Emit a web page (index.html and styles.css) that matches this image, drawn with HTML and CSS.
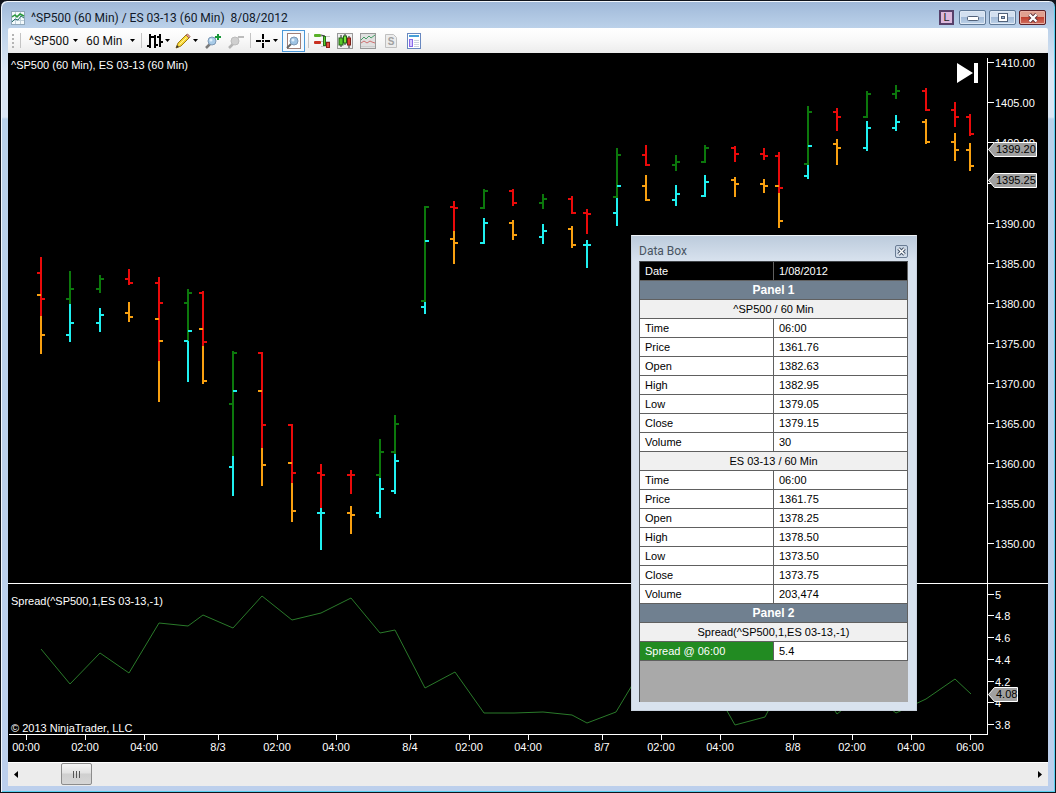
FILE: index.html
```html
<!DOCTYPE html>
<html lang="en">
<head>
    <meta charset="UTF-8">
    <meta name="viewport" content="width=device-width, initial-scale=1.0">
    <title>^SP500 (60 Min) / ES 03-13 (60 Min)</title>
    <link rel="stylesheet" href="styles.css">
</head>
<body>
    <div class="window">
        <header class="titlebar">
            <svg class="app-icon" width="14" height="14" viewBox="0 0 14 14">
                <rect x="0.5" y="0.5" width="13" height="13" fill="#f4fafc" stroke="#8fa6b8"/>
                <path d="M1 4.5h12M1 9.5h12M4.5 1v12M9.5 1v12" stroke="#c0d0da"/>
                <path d="M1 6l3-2 2 2 3-3 4 2" fill="none" stroke="#2a9a3a" stroke-width="1.5"/>
                <path d="M1 11l3-3 3 1 3-4 3 2" fill="none" stroke="#28706a"/>
            </svg>
            <h1>^SP500 (60 Min) / ES 03-13 (60 Min)&nbsp; 8/08/2012</h1>
            <button class="link-btn" aria-label="Link">L</button>
            <button class="win-btn" aria-label="Minimize">
                <svg width="12" height="6" viewBox="0 0 12 6"><rect x="0.5" y="1.5" width="11" height="4" rx="1" fill="#fff" stroke="#52627a"/></svg>
            </button>
            <button class="win-btn" aria-label="Maximize">
                <svg width="12" height="10" viewBox="0 0 12 10"><rect x="1.5" y="0.5" width="9" height="8" fill="#fff" stroke="#52627a"/><rect x="4.5" y="3.5" width="3" height="2" fill="#9fb6d2" stroke="#52627a"/></svg>
            </button>
            <button class="win-btn close" aria-label="Close">
                <svg width="12" height="10" viewBox="0 0 12 10"><path d="M2.5 1.5l7 7M9.5 1.5l-7 7" stroke="#5a3038" stroke-width="4"/><path d="M2.5 1.5l7 7M9.5 1.5l-7 7" stroke="#fff" stroke-width="2.4"/></svg>
            </button>
        </header>

        <nav class="toolbar">
            <span class="grip"></span>
            <span class="sep"></span>
            <label class="drop">
                <select class="instrument" aria-label="Instrument"><option>^SP500</option></select>
                <svg class="arrow" width="5" height="3"><path d="M0 0h5L2.5 3z"/></svg>
            </label>
            <label class="drop">
                <select class="period" aria-label="Period"><option>60 Min</option></select>
                <svg class="arrow" width="5" height="3"><path d="M0 0h5L2.5 3z"/></svg>
            </label>
            <span class="sep"></span>
            <button class="tool split" aria-label="Chart style">
                <svg width="16" height="16" viewBox="0 0 16 16" shape-rendering="crispEdges"><path d="M3 1v14M8 2v13M13 1v13M0 13h3M3 4h3M6 4h2M8 12h3M10 4h3M13 9h3" stroke="#000" stroke-width="2"/></svg>
                <svg class="arrow" width="5" height="3"><path d="M0 0h5L2.5 3z"/></svg>
            </button>
            <button class="tool split" aria-label="Drawing tools">
                <svg width="16" height="16" viewBox="0 0 16 16"><path d="M1 15l2-5 8-8 3 3-8 8z" fill="#f8d838" stroke="#a07a10"/><path d="M4.5 11.5l7-7" stroke="#fff3a0"/><path d="M11 2l1.5-1 2.5 2.5L14 5z" fill="#e8a0a0" stroke="#a06a50"/><path d="M1 15l1-3 2 2z" fill="#333"/></svg>
                <svg class="arrow" width="5" height="3"><path d="M0 0h5L2.5 3z"/></svg>
            </button>
            <button class="tool zoom" aria-label="Zoom in">
                <svg width="16" height="16" viewBox="0 0 16 16"><path d="M1 15l4-4" stroke="#7a7a7a" stroke-width="2.5"/><circle cx="7" cy="8" r="4" fill="#a8cbe8" stroke="#7c98b4"/><circle cx="6" cy="7" r="1.5" fill="#e0f0fc"/><path d="M10 4h6M13 1v6" stroke="#189838" stroke-width="2"/></svg>
            </button>
            <button class="tool zoom" aria-label="Zoom out">
                <svg width="16" height="16" viewBox="0 0 16 16"><path d="M1 15l4-4" stroke="#b4b4b4" stroke-width="2.5"/><circle cx="7" cy="8" r="4" fill="#cfcfcf" stroke="#bcbcbc"/><path d="M10 4h6" stroke="#bcbcbc" stroke-width="2"/></svg>
            </button>
            <span class="sep"></span>
            <button class="tool split" aria-label="Crosshair">
                <svg width="15" height="16" viewBox="0 0 15 16" shape-rendering="crispEdges"><path d="M0 8h5M9 8h5M7 1v5M7 10v5" stroke="#000" stroke-width="2"/><rect x="6" y="7" width="2" height="2"/></svg>
                <svg class="arrow" width="5" height="3"><path d="M0 0h5L2.5 3z"/></svg>
            </button>
            <button class="tool active" aria-label="Data box">
                <svg width="16" height="16" viewBox="0 0 16 16"><rect x="1.5" y="0.5" width="13" height="15" fill="#fff" stroke="#a08078"/><path d="M1 15l4-4" stroke="#666" stroke-width="2"/><circle cx="8" cy="8" r="4" fill="#9fc4e4" stroke="#7c98b4"/><circle cx="7" cy="7" r="1.5" fill="#e0f0fc"/></svg>
            </button>
            <span class="sep"></span>
            <button class="tool panel-icon" aria-label="Chart trader">
                <svg width="16" height="16" viewBox="0 0 16 16"><path d="M7 3.5h9M7 8.5h9M7 13.5h9" stroke="#c4c4c4"/><rect x="0" y="1" width="7" height="3" rx="1" fill="#58b028"/><rect x="0" y="8" width="7" height="3" rx="1" fill="#c83020"/><path d="M7 2l4 1" stroke="#333"/><rect x="9.5" y="3.5" width="2" height="9" fill="#60d030" stroke="#287018"/><rect x="12.5" y="9.5" width="3" height="5" fill="#e05040" stroke="#902018"/></svg>
            </button>
            <button class="tool panel-icon" aria-label="Data series">
                <svg width="16" height="16" viewBox="0 0 16 16"><rect x="0.5" y="0.5" width="15" height="15" fill="#eee" stroke="#999"/><path d="M4 2v12M8 1v11M12 3v12" stroke="#222"/><rect x="2" y="5" width="4" height="7" fill="#58c828" stroke="#226018"/><rect x="6.5" y="3" width="3" height="7" fill="#78e838" stroke="#226018"/><rect x="10.5" y="5" width="3" height="7" fill="#d84030" stroke="#802018"/></svg>
            </button>
            <button class="tool panel-icon" aria-label="Indicators">
                <svg width="16" height="16" viewBox="0 0 16 16"><rect x="0.5" y="0.5" width="15" height="15" fill="#e0e0e0" stroke="#999"/><path d="M1 13.5h14" stroke="#ccc"/><path d="M1 7l3-3 2 2 3-3 2 2 4-3" fill="none" stroke="#48a068"/><path d="M1 10l3-2 3 2 3-2 2 1 3 1" fill="none" stroke="#d07070"/></svg>
            </button>
            <button class="tool panel-icon" aria-label="Strategies" disabled>
                <svg width="16" height="16" viewBox="0 0 16 16"><path d="M2.5 1.5h8l3 3v10h-11z" fill="#ececec" stroke="#c0c0c0"/><text x="8" y="12" class="dollar">S</text></svg>
            </button>
            <button class="tool panel-icon" aria-label="Properties">
                <svg width="16" height="16" viewBox="0 0 16 16"><rect x="1.5" y="0.5" width="13" height="15" fill="#fff" stroke="#6888c0"/><rect x="3" y="2" width="10" height="2" fill="#48a0d8"/><rect x="3.5" y="6.5" width="3" height="7" fill="#d8c8ff" stroke="#8868e8"/><path d="M8 7.5h5M8 9.5h5M8 11.5h5M8 13.5h5" stroke="#ccd2de"/></svg>
            </button>
        </nav>

        <main class="chart">
            <svg id="chart" class="chart-svg" viewBox="8 53 1040 708" role="img" aria-label="Price and spread chart"></svg>
            <button class="go-end" aria-label="Go to last bar">
                <svg width="22" height="22" viewBox="0 0 22 22"><path d="M0 1l16 10L0 21zM17 1h4v20h-4z" fill="#fff"/></svg>
            </button>

            <section class="databox">
                <div class="databox-title">
                    <h2>Data Box</h2>
                    <button class="databox-close" aria-label="Close data box">
                        <svg width="9" height="9" viewBox="0 0 9 9"><path d="M1.5 1.5l6 6M7.5 1.5l-6 6" stroke="#44546a" stroke-width="3.5"/><path d="M1.5 1.5l6 6M7.5 1.5l-6 6" stroke="#fff" stroke-width="1.5"/></svg>
                    </button>
                </div>
                <div class="databox-body">
                    <table>
                        <tbody>
                            <tr class="date"><td>Date</td><td>1/08/2012</td></tr>
                            <tr class="panel"><th colspan="2">Panel 1</th></tr>
                            <tr class="series"><th colspan="2">^SP500 / 60 Min</th></tr>
                            <tr><td>Time</td><td>06:00</td></tr>
                            <tr><td>Price</td><td>1361.76</td></tr>
                            <tr><td>Open</td><td>1382.63</td></tr>
                            <tr><td>High</td><td>1382.95</td></tr>
                            <tr><td>Low</td><td>1379.05</td></tr>
                            <tr><td>Close</td><td>1379.15</td></tr>
                            <tr><td>Volume</td><td>30</td></tr>
                            <tr class="series"><th colspan="2">ES 03-13 / 60 Min</th></tr>
                            <tr><td>Time</td><td>06:00</td></tr>
                            <tr><td>Price</td><td>1361.75</td></tr>
                            <tr><td>Open</td><td>1378.25</td></tr>
                            <tr><td>High</td><td>1378.50</td></tr>
                            <tr><td>Low</td><td>1373.50</td></tr>
                            <tr><td>Close</td><td>1373.75</td></tr>
                            <tr><td>Volume</td><td>203,474</td></tr>
                            <tr class="panel"><th colspan="2">Panel 2</th></tr>
                            <tr class="series"><th colspan="2">Spread(^SP500,1,ES 03-13,-1)</th></tr>
                            <tr class="spread"><td>Spread @ 06:00</td><td>5.4</td></tr>
                        </tbody>
                    </table>
                </div>
            </section>
        </main>

        <footer class="scroll">
            <button aria-label="Scroll left"><svg width="4" height="7"><path d="M4 0v7L0 3.5z"/></svg></button>
            <input type="range" min="0" max="1000" value="38" aria-label="Scroll chart">
            <button aria-label="Scroll right"><svg width="4" height="7"><path d="M0 0v7l4-3.5z"/></svg></button>
        </footer>
    </div>
    <script src="chart.js"></script>
</body>
</html>
```

FILE: styles.css
```css
* {
    box-sizing: border-box;
}
body {
    margin: 0;
    background: #10141c;
    font-family: "Liberation Sans", Arial, sans-serif;
    font-size: 11px;
    color: #000;
}
button {
    padding: 0;
    margin: 0;
    border: none;
    background: none;
    display: flex;
    align-items: center;
    justify-content: center;
}
svg {
    display: block;
    flex: none;
}
.window {
    display: flex;
    flex-direction: column;
    min-height: 100vh;
    padding: 0 6px 6px;
    border: 1px solid #10141c;
    border-radius: 7px 7px 0 0;
    background: linear-gradient(#9fb8d8, #bcd2ea 28px, #dbe6f4 70px, #dbe6f4 116px, #b9d1ea 118px, #bccfec);
    box-shadow: inset 1px 1px 0 #f2f7fc, inset -1px -1px 0 #58d0f0;
}

/* title bar */
.titlebar {
    display: flex;
    align-items: center;
    gap: 3px;
    height: 27px;
    padding: 6px 3px 0 4px;
}
.titlebar h1 {
    flex: 1;
    margin: 0 0 0 3px;
    font: 12px/16px Roboto, sans-serif;
    color: #101828;
}
.link-btn {
    width: 15px;
    height: 15px;
    margin-right: 2px;
    border: 2px solid #56406a;
    background: #dcb8dc;
    font: 11px/11px "Liberation Sans", Arial, sans-serif;
    color: #222;
}
.win-btn {
    width: 27px;
    height: 15px;
    border: 1px solid #5f7896;
    border-radius: 2px;
    background: linear-gradient(#d3e0f0 45%, #a3bbd8 50%, #bdd2e8);
    box-shadow: inset 0 0 0 1px #dfe9f5;
}
.win-btn.close {
    border-color: #5c2028;
    background: linear-gradient(#e0a090 45%, #c04030 50%, #d07060);
    box-shadow: inset 0 0 0 1px #e8b0a4;
}

/* toolbar */
.toolbar {
    display: flex;
    align-items: center;
    height: 25px;
    margin: 0 1px;
    border-radius: 2px;
    background: linear-gradient(#ffffff, #f8f8f8 50%, #ececec);
}
.grip {
    width: 2px;
    height: 14px;
    margin: 0 6px 0 4px;
    background: repeating-linear-gradient(#b4b4b4 0 2px, transparent 2px 4px);
}
.sep {
    width: 1px;
    height: 15px;
    background: #c4c4c4;
}
.drop {
    display: flex;
    align-items: center;
    margin-left: 8px;
}
select {
    appearance: none;
    padding: 0;
    border: none;
    background: none;
    font: 12px/16px Roboto, sans-serif;
    color: #111;
}
.instrument,
.period {
    width: 44px;
}
.period + .arrow {
    margin-right: 6px;
}
.tool {
    height: 22px;
    margin-left: 5px;
}
.split {
    gap: 2px;
}
.zoom {
    margin-left: 7px;
}
.zoom + .sep {
    margin-left: 6px;
}
.active {
    width: 23px;
    margin: 0 3px 0 4px;
    border: 1px solid #4a98d8;
    background: #f4faff;
}
.panel-icon {
    margin-left: 5px;
    margin-right: 2px;
}
.dollar {
    font: bold 10px "Liberation Sans", Arial, sans-serif;
    fill: #a0a0a0;
    text-anchor: middle;
}

/* chart */
.chart {
    position: relative;
    flex: 1;
    margin: 0 1px;
    background: #000;
}
.chart-svg {
    width: 100%;
    height: auto;
    font-size: 11px;
}
.chart-svg text {
    fill: #fff;
}
.chart-svg .middle {
    text-anchor: middle;
}
.chart-svg .tag-text {
    fill: #000;
}
.axis {
    stroke: #fff;
    fill: none;
    shape-rendering: crispEdges;
}
.tag {
    fill: #a0a0a0;
    stroke: #fff;
}
.bar {
    stroke-width: 2;
    fill: none;
    shape-rendering: crispEdges;
}
.sp-up { stroke: #0c780c; }
.sp-down { stroke: #ea0a0a; }
.es-up { stroke: #1ff0f0; }
.es-down { stroke: #f8a010; }
.spread-line {
    fill: none;
    stroke: #2a7a2a;
}
.go-end {
    position: absolute;
    top: 9px;
    right: 69px;
}

/* data box */
.databox {
    position: absolute;
    top: 182px;
    right: 131px;
    width: 286px;
    padding: 0 8px 8px 7px;
    border: 1px solid #c8d2de;
    border-top-color: #f0f4f8;
    background: linear-gradient(#bccbdc, #d8e2ee 25px);
}
.databox-title {
    display: flex;
    align-items: center;
    justify-content: space-between;
    height: 25px;
    padding-top: 5px;
}
.databox-title h2 {
    margin: 0;
    font: 12px/16px Roboto, sans-serif;
    color: #485462;
}
.databox-close {
    width: 13px;
    height: 13px;
    border: 1px solid #6a7c94;
    border-radius: 2px;
}
.databox-body {
    padding-bottom: 41px;
    border-top: 1px solid #404448;
    border-left: 1px solid #505458;
    background: #a9a9a9;
}
table {
    width: 100%;
    table-layout: fixed;
    border-collapse: separate;
    border-spacing: 0;
    line-height: 18px;
}
td,
th {
    height: 19px;
    padding: 0 5px;
    border-bottom: 1px solid #606060;
    border-right: 1px solid #606060;
    background: #fff;
    font-weight: normal;
    text-align: left;
}
th {
    text-align: center;
}
.date td {
    background: #000;
    color: #fff;
}
.panel th {
    background: #708090;
    color: #fff;
    font-weight: bold;
    font-size: 12px;
}
.series th {
    background: #f0f0f0;
}
.spread td:first-child {
    background: #228b22;
    color: #fff;
}

/* scroll bar */
.scroll {
    display: flex;
    height: 24px;
    margin: 0 1px;
    border-top: 1px solid #fff;
    background: #ececec;
}
.scroll button {
    width: 16px;
    height: 22px;
}
.scroll input {
    appearance: none;
    flex: 1;
    min-width: 0;
    height: 22px;
    margin: 0;
    background: none;
}
.scroll input::-webkit-slider-thumb {
    appearance: none;
    width: 31px;
    height: 22px;
    border: 1px solid #8c8c8c;
    border-radius: 2px;
    background:
        repeating-linear-gradient(90deg, #555 0 1px, transparent 1px 3px) center / 7px 7px no-repeat,
        linear-gradient(#f4f4f4, #e2e2e2 45%, #cfcfcf 50%, #d6d6d6);
}
```

FILE: chart.js
```js
// x, then for each series: direction, top, bottom, open, close
const bars = [
    [41, 'down', 257, 316, 273, 299, 'down', 316, 354, 295, 335],
    [70, 'up', 271, 304, 299, 289, 'up', 304, 342, 335, 323],
    [100, 'up', 275, 293, 289, 279, 'up', 308, 332, 323, 315],
    [129, 'down', 269, 285, 279, 283, 'down', 302, 322, 313, 317],
    [159, 'down', 277, 361, 283, 303, 'down', 361, 402, 319, 341],
    [188, 'up', 289, 341, 303, 293, 'up', 341, 382, 341, 331],
    [203, 'down', 291, 346, 293, 342, 'down', 346, 384, 329, 381],
    [233, 'up', 351, 456, 404, 353, 'up', 456, 496, 467, 391],
    [262, 'down', 352, 448, 353, 425, 'down', 448, 486, 391, 465],
    [292, 'down', 424, 483, 425, 473, 'down', 483, 522, 463, 511],
    [321, 'down', 464, 508, 473, 475, 'up', 508, 550, 513, 513],
    [351, 'down', 470, 494, 475, 475, 'down', 506, 534, 513, 515],
    [380, 'up', 439, 478, 475, 452, 'up', 478, 518, 513, 489],
    [395, 'up', 415, 454, 452, 424, 'up', 454, 494, 491, 461],
    [425, 'up', 206, 302, 301, 207, 'up', 302, 314, 307, 241],
    [454, 'down', 201, 231, 207, 208, 'down', 231, 264, 239, 243],
    [484, 'up', 189, 209, 208, 191, 'up', 218, 244, 243, 223],
    [513, 'down', 189, 206, 191, 203, 'down', 220, 240, 223, 235],
    [543, 'up', 194, 209, 203, 199, 'up', 224, 244, 237, 231],
    [572, 'down', 196, 214, 199, 213, 'down', 226, 248, 229, 245],
    [587, 'down', 209, 234, 213, 214, 'up', 240, 268, 245, 245],
    [617, 'up', 148, 198, 197, 155, 'up', 198, 226, 213, 186],
    [646, 'down', 145, 166, 155, 165, 'down', 175, 201, 186, 200],
    [676, 'up', 155, 171, 165, 162, 'up', 185, 206, 200, 194],
    [705, 'up', 145, 163, 162, 148, 'up', 175, 197, 196, 182],
    [735, 'down', 146, 162, 148, 154, 'down', 177, 197, 180, 184],
    [764, 'down', 148, 160, 154, 156, 'down', 179, 193, 184, 186],
    [779, 'down', 152, 193, 156, 188, 'down', 193, 228, 186, 221],
    [808, 'up', 106, 165, 164, 112, 'up', 165, 179, 176, 146],
    [837, 'down', 108, 131, 112, 117, 'down', 139, 165, 144, 148],
    [867, 'up', 91, 118, 117, 94, 'up', 121, 151, 148, 128],
    [896, 'up', 85, 99, 94, 91, 'up', 115, 131, 128, 122],
    [926, 'down', 88, 111, 91, 110, 'down', 119, 144, 122, 142],
    [955, 'down', 102, 127, 110, 117, 'down', 133, 161, 142, 150],
    [970, 'down', 114, 136, 117, 134, 'down', 143, 171, 150, 166]
];

const spread = '41,649 70,684 100,653 129,673 159,623 188,626 203,615 233,628 262,596 292,620 321,613 351,598 380,633 395,630 425,688 455,672 484,713 514,713 543,712 572,715 587,723 616,712 646,662 676,665 705,672 735,725 765,717 779,690 808,670 837,714 867,690 896,713 926,699 955,679 971,694';

const prices = [
    ['1410.00', 62], ['1405.00', 102], ['1400.00', 142], ['', 183], ['1390.00', 223],
    ['1385.00', 263], ['1380.00', 303], ['1375.00', 343], ['1370.00', 383], ['1365.00', 423],
    ['1360.00', 463], ['1355.00', 503], ['1350.00', 543],
    ['5', 594], ['4.8', 615], ['4.6', 637], ['4.4', 659], ['4.2', 681], ['4', 702], ['3.8', 724]
];

const times = [
    ['00:00', 26], ['02:00', 85], ['04:00', 144], ['8/3', 218], ['02:00', 277], ['04:00', 336],
    ['8/4', 410], ['02:00', 469], ['04:00', 528], ['8/7', 602], ['02:00', 661], ['04:00', 720],
    ['8/8', 793], ['02:00', 852], ['04:00', 911], ['06:00', 970]
];

const tags = [['1399.20', 149, 1037], ['1395.25', 180, 1037], ['4.08', 694, 1018]];

function text(x, y, value, cls) {
    return `<text x="${x}" y="${y}" class="${cls || ''}">${value}</text>`;
}

function line(d, cls) {
    return `<path d="${d}" class="${cls}"/>`;
}

function drawBar(x, series, dir, top, bottom, open, close) {
    return line(`M${x} ${top}V${bottom}M${x - 4} ${open}H${x}M${x} ${close}H${x + 4}`, `bar ${series}-${dir}`);
}

function drawChart() {
    let out = '';
    bars.forEach(b => {
        out += drawBar(b[0], 'sp', ...b.slice(1, 6));
        out += drawBar(b[0], 'es', ...b.slice(6));
    });
    out += `<polyline points="${spread}" class="spread-line"/>`;

    // panel divider and the two axes
    out += line('M8 583.5H1048M9 734.5H988M987.5 58V735', 'axis');
    prices.forEach(([label, y]) => {
        out += line(`M988 ${y + 0.5}H994`, 'axis');
        out += text(995, y + 5, label);
    });
    times.forEach(([label, x]) => {
        out += line(`M${x + 0.5} 735V740`, 'axis');
        out += text(x, 751, label, 'middle');
    });
    tags.forEach(([label, y, right]) => {
        out += `<path d="M988.5 ${y + 0.5}l6 -7H${right - 0.5}v14H994.5z" class="tag"/>`;
        out += text(996, y + 4, label, 'tag-text');
    });

    out += text(11, 69, '^SP500 (60 Min), ES 03-13 (60 Min)');
    out += text(11, 605, 'Spread(^SP500,1,ES 03-13,-1)');
    out += text(11, 732, '© 2013 NinjaTrader, LLC');
    document.getElementById('chart').innerHTML = out;
}

drawChart();
```
